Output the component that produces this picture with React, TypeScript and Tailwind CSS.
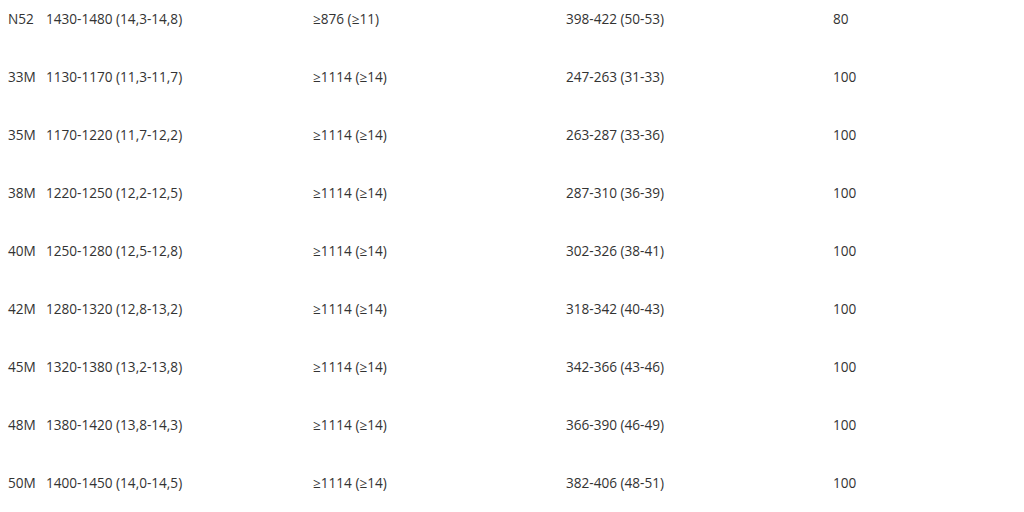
import React from 'react';

type Row = { grade: string; br: string; hcb: string; bh: string; temp: string };

const rows: Row[] = [
  { grade: 'N52', br: '1430-1480 (14,3-14,8)', hcb: '≥876 (≥11)', bh: '398-422 (50-53)', temp: '80' },
  { grade: '33M', br: '1130-1170 (11,3-11,7)', hcb: '≥1114 (≥14)', bh: '247-263 (31-33)', temp: '100' },
  { grade: '35M', br: '1170-1220 (11,7-12,2)', hcb: '≥1114 (≥14)', bh: '263-287 (33-36)', temp: '100' },
  { grade: '38M', br: '1220-1250 (12,2-12,5)', hcb: '≥1114 (≥14)', bh: '287-310 (36-39)', temp: '100' },
  { grade: '40M', br: '1250-1280 (12,5-12,8)', hcb: '≥1114 (≥14)', bh: '302-326 (38-41)', temp: '100' },
  { grade: '42M', br: '1280-1320 (12,8-13,2)', hcb: '≥1114 (≥14)', bh: '318-342 (40-43)', temp: '100' },
  { grade: '45M', br: '1320-1380 (13,2-13,8)', hcb: '≥1114 (≥14)', bh: '342-366 (43-46)', temp: '100' },
  { grade: '48M', br: '1380-1420 (13,8-14,3)', hcb: '≥1114 (≥14)', bh: '366-390 (46-49)', temp: '100' },
  { grade: '50M', br: '1400-1450 (14,0-14,5)', hcb: '≥1114 (≥14)', bh: '382-406 (48-51)', temp: '100' },
];

const App: React.FC = () => {
  return (
    <div className="w-[1024px] h-[512px] overflow-hidden bg-white" style={{ fontFamily: '"Open Sans", "Noto Sans", sans-serif' }}>
      <table className="mt-[-10px] ml-[8px] border-collapse text-[13.6px] text-[#333]">
        <tbody>
          {rows.map(r => (
            <tr key={r.grade} className="h-[58px]">
              <td className="w-[38px] p-0 align-middle">{r.grade}</td>
              <td className="w-[267px] p-0 align-middle">{r.br}</td>
              <td className="w-[253px] p-0 align-middle">{r.hcb}</td>
              <td className="w-[267px] p-0 align-middle">{r.bh}</td>
              <td className="w-[150px] p-0 align-middle">{r.temp}</td>
            </tr>
          ))}
        </tbody>
      </table>
    </div>
  );
};

export default App;
